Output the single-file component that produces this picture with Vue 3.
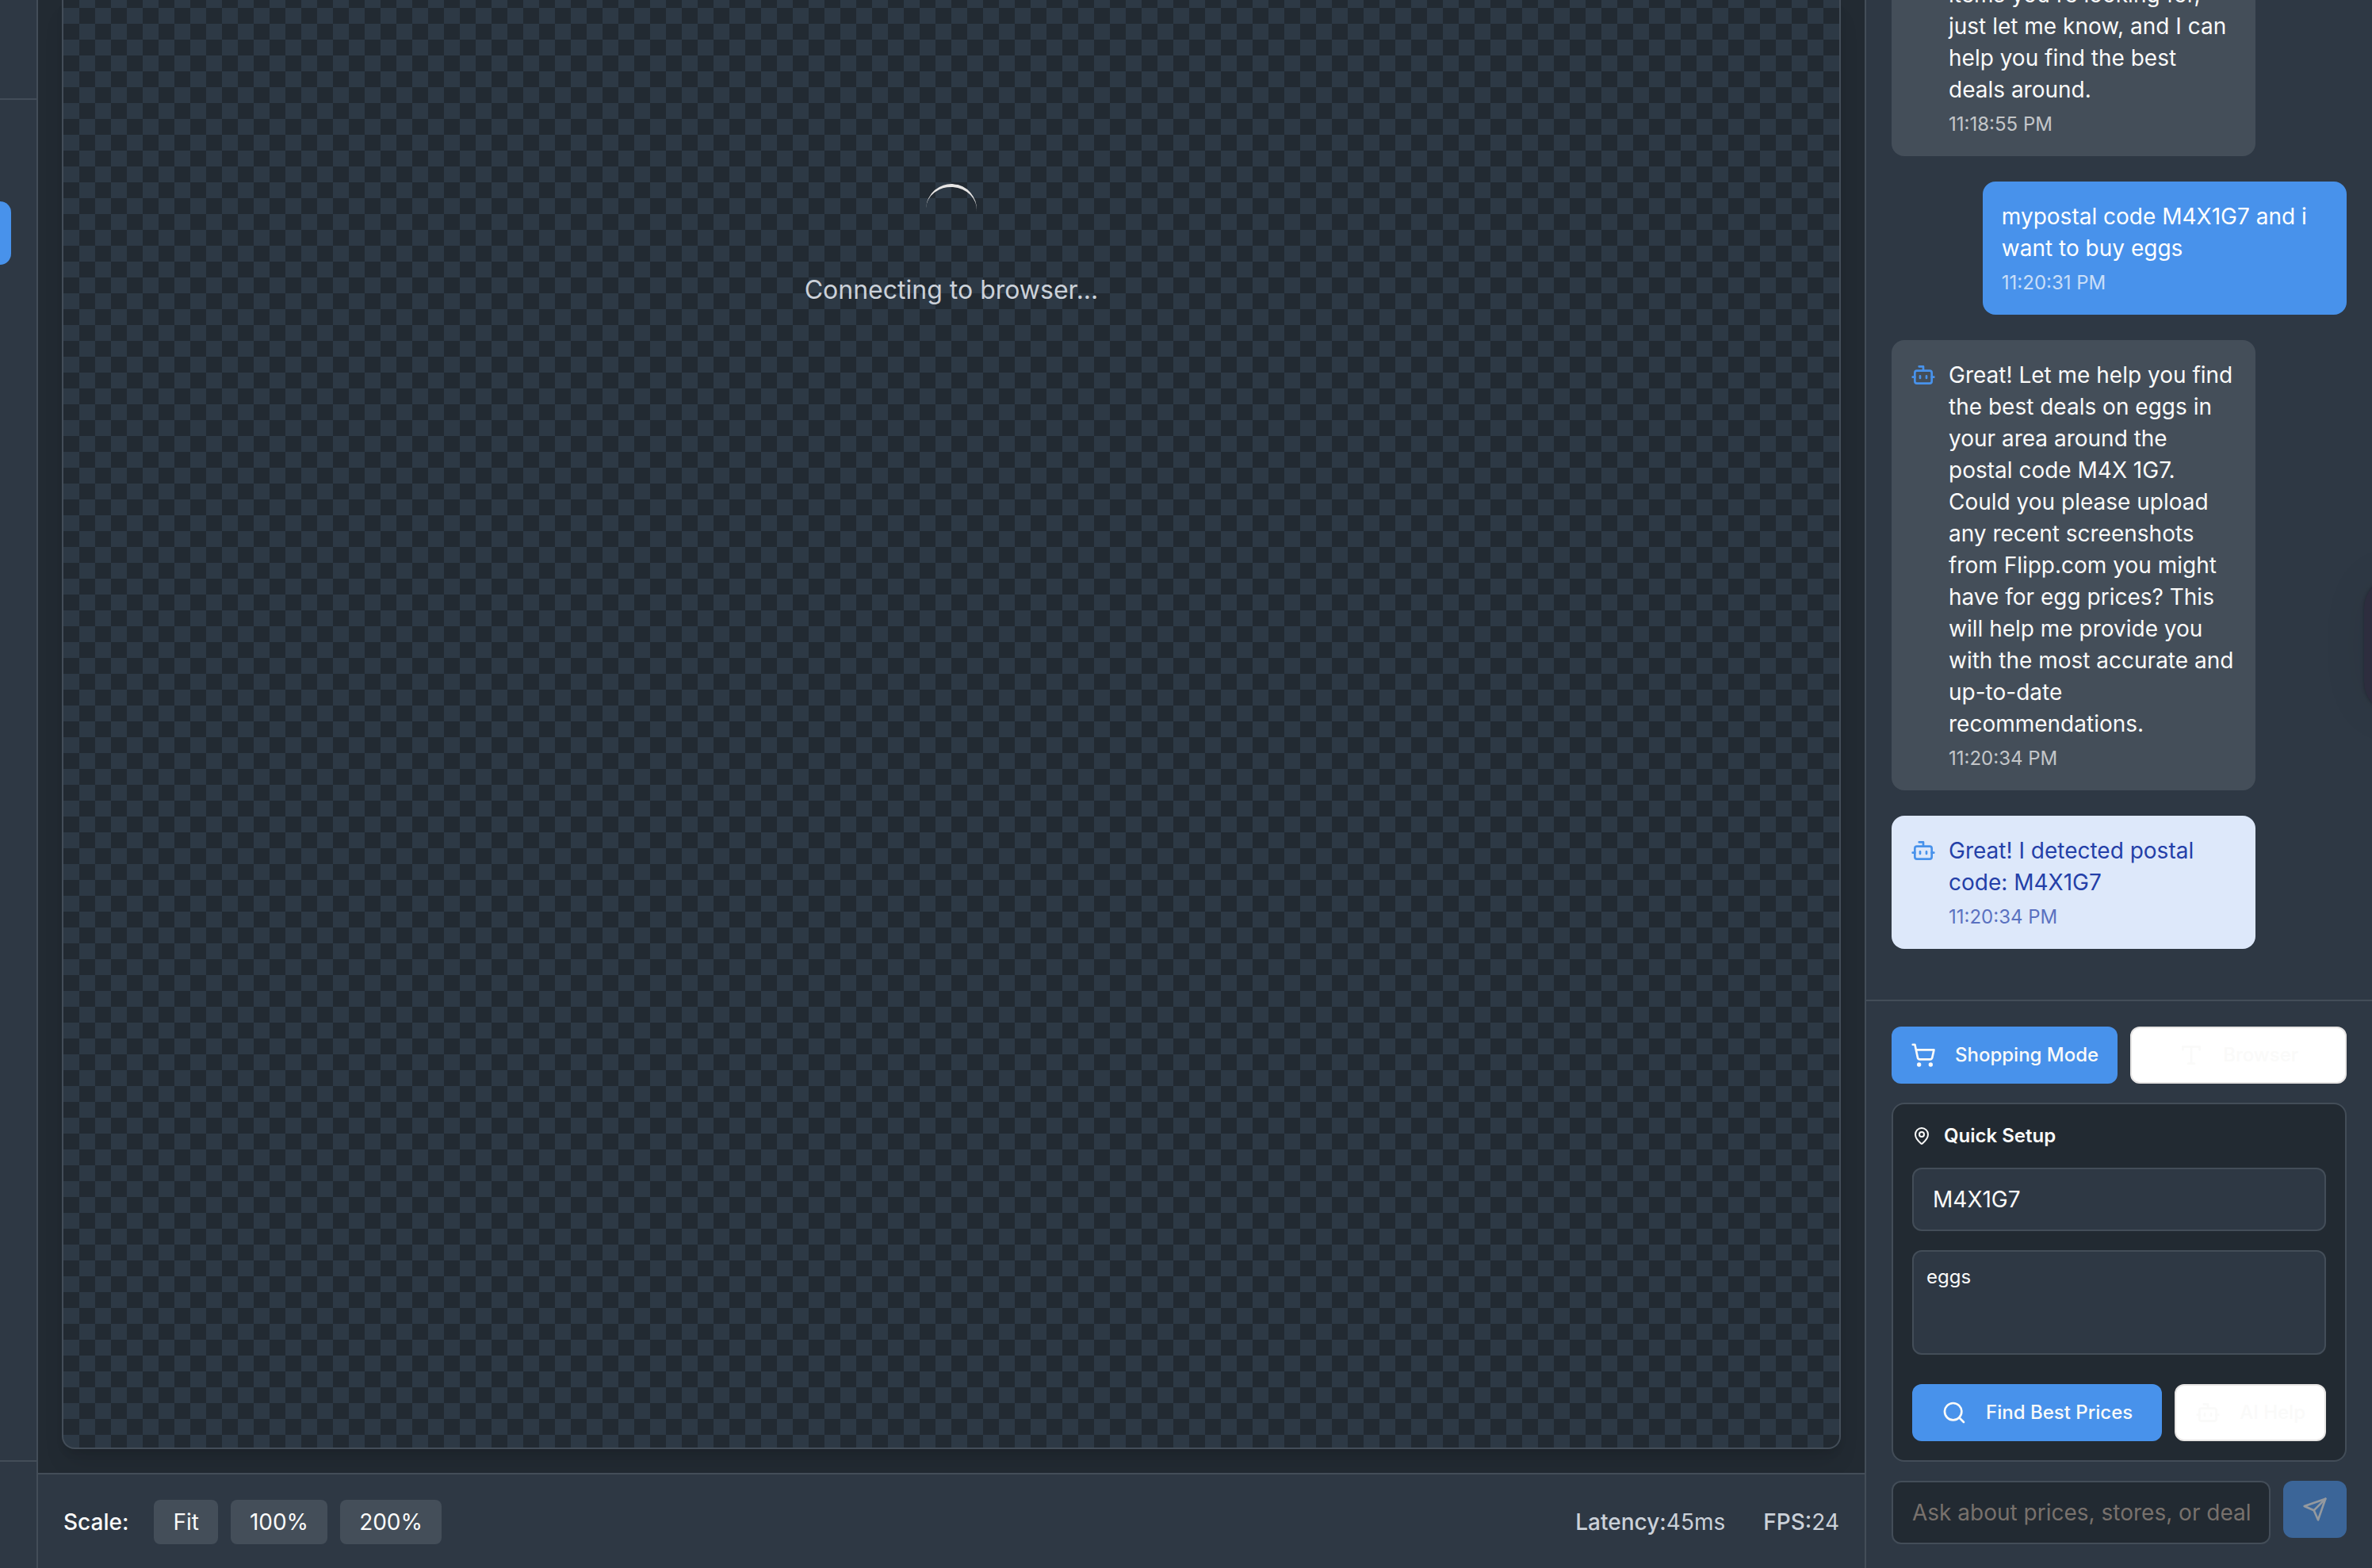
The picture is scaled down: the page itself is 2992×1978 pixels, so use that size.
<script setup>
import { ref } from 'vue'

const scales = ['Fit', '100%', '200%']
const postalCode = ref('M4X1G7')
const shoppingList = ref('eggs')
const draft = ref('')

const messages = [
  {
    kind: 'continued',
    text: "items you're looking for, just let me know, and I can help you find the best deals around.",
    time: '11:18:55 PM',
  },
  { kind: 'user', text: 'mypostal code M4X1G7 and i want to buy eggs', time: '11:20:31 PM' },
  {
    kind: 'bot',
    text: 'Great! Let me help you find the best deals on eggs in your area around the postal code M4X 1G7. Could you please upload any recent screenshots from Flipp.com you might have for egg prices? This will help me provide you with the most accurate and up-to-date recommendations.',
    time: '11:20:34 PM',
  },
  { kind: 'notice', text: 'Great! I detected postal code: M4X1G7', time: '11:20:34 PM' },
]
</script>

<template>
  <div class="app">
    <nav class="rail">
      <div class="rail-head"></div>
      <div class="rail-body"><button class="rail-item" type="button" aria-label="Browser view"></button></div>
      <div class="rail-foot"></div>
    </nav>

    <main class="viewer">
      <div class="stage">
        <div class="canvas">
          <div class="spinner"></div>
          <p class="status">Connecting to browser...</p>
        </div>
      </div>
      <footer class="toolbar">
        <div class="scales">
          <span class="scale-label">Scale:</span>
          <button v-for="s in scales" :key="s" class="scale" type="button">{{ s }}</button>
        </div>
        <div class="stats">
          <span><b>Latency:</b>45ms</span>
          <span><b>FPS:</b>24</span>
        </div>
      </footer>
    </main>

    <aside class="chat">
      <div class="messages">
        <article v-for="(m, i) in messages" :key="i" class="message" :class="m.kind">
          <svg v-if="m.kind === 'bot' || m.kind === 'notice'" class="icon bot-icon" viewBox="0 0 24 24">
            <path d="M12 8V4H8" /><rect width="16" height="12" x="4" y="8" rx="2" />
            <path d="M2 14h2M20 14h2M15 13v2M9 13v2" />
          </svg>
          <div>
            <p class="message-text">{{ m.text }}</p>
            <time class="message-time">{{ m.time }}</time>
          </div>
        </article>
      </div>

      <div class="composer">
        <div class="row">
          <button class="btn primary grow" type="button">
            <svg class="icon" viewBox="0 0 24 24">
              <circle cx="8" cy="21" r="1" /><circle cx="19" cy="21" r="1" />
              <path d="M2.05 2.05h2l2.66 12.42a2 2 0 0 0 2 1.58h9.78a2 2 0 0 0 1.95-1.57l1.65-7.43H5.12" />
            </svg>
            Shopping Mode
          </button>
          <button class="btn outline grow" type="button">
            <svg class="icon" viewBox="0 0 24 24">
              <path d="M4 7V4h16v3M9 20h6M12 4v16" />
            </svg>
            Browser
          </button>
        </div>

        <section class="setup">
          <h2 class="setup-title">
            <svg class="icon small" viewBox="0 0 24 24">
              <path d="M20 10c0 4.993-5.539 10.193-7.399 11.799a1 1 0 0 1-1.202 0C9.539 20.193 4 14.993 4 10a8 8 0 0 1 16 0" />
              <circle cx="12" cy="10" r="3" />
            </svg>
            Quick Setup
          </h2>
          <input v-model="postalCode" class="field" type="text" aria-label="Postal code" />
          <textarea v-model="shoppingList" class="area" aria-label="Shopping list"></textarea>
          <div class="row actions">
            <button class="btn primary grow" type="button">
              <svg class="icon" viewBox="0 0 24 24">
                <circle cx="11" cy="11" r="8" /><path d="m21 21-4.3-4.3" />
              </svg>
              Find Best Prices
            </button>
            <button class="btn outline" type="button">
              <svg class="icon" viewBox="0 0 24 24">
                <path d="M12 8V4H8" /><rect width="16" height="12" x="4" y="8" rx="2" />
                <path d="M2 14h2M20 14h2M15 13v2M9 13v2" />
              </svg>
              AI Help
            </button>
          </div>
        </section>

        <form class="row ask" @submit.prevent>
          <input v-model="draft" class="field dark" type="text" aria-label="Message" placeholder="Ask about prices, stores, or deal" />
          <button class="btn primary send" type="submit" aria-label="Send" disabled>
            <svg class="icon" viewBox="0 0 24 24">
              <path d="m22 2-7 20-4-9-9-4Z" /><path d="M22 2 11 13" />
            </svg>
          </button>
        </form>
      </div>
      <div class="edge-tab"></div>
    </aside>
  </div>
</template>

<style>
body {
  margin: 0;
  background: #222a32;
}
</style>

<style scoped>
* {
  box-sizing: border-box;
}
.app {
  --panel: #2e3844;
  --base: #222a32;
  --line: #434d58;
  --blue: #4892eb;
  --text: #fafaf9;
  display: flex;
  height: 100vh;
  overflow: hidden;
  background: var(--base);
  color: var(--text);
  font-family: Inter, "Liberation Sans", sans-serif;
  font-size: 28px;
  line-height: 40px;
}
button,
input,
textarea {
  font: inherit;
  color: inherit;
  margin: 0;
}
p,
h2 {
  margin: 0;
}
.icon {
  flex: none;
  display: block;
  width: 32px;
  height: 32px;
  fill: none;
  stroke: currentColor;
  stroke-width: 2;
  stroke-linecap: round;
  stroke-linejoin: round;
}
.icon.small {
  width: 24px;
  height: 24px;
}

/* left rail */
.rail {
  flex: none;
  display: flex;
  flex-direction: column;
  width: 48px;
  background: var(--panel);
  border-right: 2px solid var(--line);
}
.rail-head {
  height: 126px;
  border-bottom: 2px solid var(--line);
}
.rail-body {
  flex: 1;
  padding-top: 128px;
}
.rail-item {
  display: block;
  width: 14px;
  height: 80px;
  padding: 0;
  border: 0;
  border-radius: 0 16px 16px 0;
  background: var(--blue);
}
.rail-foot {
  height: 136px;
  border-top: 2px solid var(--line);
}

/* browser viewer */
.viewer {
  flex: 1;
  min-width: 0;
  display: flex;
  flex-direction: column;
}
.stage {
  flex: 1;
  display: flex;
  padding: 0 30px 30px;
  overflow: hidden;
}
.canvas {
  flex: 1;
  display: flex;
  flex-direction: column;
  align-items: center;
  gap: 42px;
  padding-top: 232px;
  border: 2px solid var(--line);
  border-top: 0;
  border-radius: 0 0 16px 16px;
  background: conic-gradient(#222a32 25%, #2d3945 0 50%, #222a32 0 75%, #2d3945 0) 0 10px / 40px 40px;
  box-shadow: 0 20px 30px -6px rgb(0 0 0 / 0.1), 0 8px 12px -4px rgb(0 0 0 / 0.1);
}
.spinner {
  width: 64px;
  height: 64px;
  border-top: 4px solid #e7e5e4;
  border-radius: 50%;
  transform: rotate(4deg);
}
.status {
  font-size: 32px;
  line-height: 56px;
  color: #cbd1d9;
}
.toolbar {
  display: flex;
  justify-content: space-between;
  align-items: center;
  padding: 32px 32px 30px;
  background: var(--panel);
  border-top: 2px solid var(--line);
}
.scales {
  display: flex;
  align-items: center;
  gap: 16px;
}
.scale-label {
  margin-right: 16px;
  font-weight: 500;
}
.scale {
  padding: 8px 24px;
  border: 0;
  border-radius: 8px;
  background: #444e59;
}
.stats {
  display: flex;
  gap: 48px;
  color: #cbd1d9;
}
.stats b {
  font-weight: 500;
}

/* chat */
.chat {
  position: relative;
  flex: none;
  display: flex;
  flex-direction: column;
  width: 640px;
  background: var(--panel);
  border-left: 2px solid var(--line);
  overflow: hidden;
}
.messages {
  flex: 1;
  min-height: 0;
  display: flex;
  flex-direction: column;
  justify-content: flex-end;
  gap: 32px;
  padding: 0 32px 64px;
  overflow: hidden;
}
.message {
  flex: none;
  display: flex;
  align-items: flex-start;
  gap: 16px;
  width: 80%;
  padding: 24px;
  border-radius: 16px;
  background: #444e59;
}
.message.continued {
  padding-left: 72px;
}
.message.user {
  align-self: flex-end;
  background: var(--blue);
  color: #fff;
}
.message.notice {
  background: #dde8fa;
  color: #2440a8;
}
.bot-icon {
  margin-top: 4px;
  color: var(--blue);
}
.message-time {
  display: block;
  margin-top: 8px;
  font-size: 24px;
  line-height: 32px;
  opacity: 0.7;
}
.composer {
  flex: none;
  padding: 32px 32px 30px;
  border-top: 2px solid var(--line);
}
.row {
  display: flex;
  gap: 16px;
}
.grow {
  flex: 1;
}
.btn {
  display: flex;
  align-items: center;
  justify-content: center;
  gap: 24px;
  height: 72px;
  padding: 0 24px;
  border: 0;
  border-radius: 12px;
  font-size: 24px;
  line-height: 32px;
  font-weight: 500;
  white-space: nowrap;
}
.primary {
  background: var(--blue);
  color: #fafaf9;
}
.outline {
  border: 2px solid #e7e5e4;
  background: #fff;
  color: #fafaf9;
}
.setup {
  margin: 24px 0;
  padding: 24px;
  border: 2px solid var(--line);
  border-radius: 16px;
  background: var(--base);
}
.setup-title {
  display: flex;
  align-items: center;
  gap: 16px;
  margin-bottom: 24px;
  font-size: 24px;
  line-height: 32px;
  font-weight: 600;
}
.field,
.area {
  display: block;
  width: 100%;
  border: 2px solid var(--line);
  border-radius: 12px;
  background: var(--panel);
  outline: 0;
}
.field {
  height: 80px;
  padding: 0 24px;
}
.area {
  height: 132px;
  margin-top: 24px;
  padding: 16px;
  font-size: 24px;
  line-height: 32px;
  resize: none;
}
.actions {
  margin-top: 37px;
}
.ask {
  align-items: flex-start;
}
.dark {
  flex: 1;
  min-width: 0;
  background: var(--base);
}
.dark::placeholder {
  color: #78716c;
  opacity: 1;
}
.send {
  flex: none;
  width: 80px;
  opacity: 0.5;
}

/* floating handle that peeks in from the right edge */
.edge-tab {
  position: absolute;
  top: 728px;
  right: -70px;
  width: 80px;
  height: 172px;
  border-radius: 40px;
  background: #2d2d3e;
  box-shadow: 0 0 4px rgb(0 0 0 / 0.3), 0 0 64px rgb(0 0 0 / 0.06);
}
</style>
